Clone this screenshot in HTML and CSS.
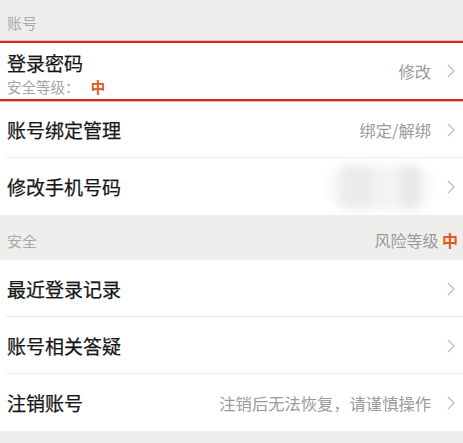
FILE: index.html
```html
<!DOCTYPE html>
<html lang="zh-CN">
<head>
<meta charset="utf-8">
<link rel="stylesheet" href="styles.css">
</head>
<body>
<div class="page">
  <div class="section-head head-first"><span>账号</span></div>
  <div class="group">
    <div class="row row-highlight">
      <div class="left">
        <div class="title">登录密码</div>
        <div class="sub">安全等级： <b class="level">中</b></div>
      </div>
      <div class="right"><span class="value">修改</span><svg class="chev" width="8" height="14" viewBox="0 0 8 14"><polyline points="1,1 7,7 1,13" fill="none" stroke="#bdbdbd" stroke-width="1.3"/></svg></div>
    </div>
    <div class="row sep">
      <div class="left"><div class="title">账号绑定管理</div></div>
      <div class="right"><span class="value">绑定/解绑</span><svg class="chev" width="8" height="14" viewBox="0 0 8 14"><polyline points="1,1 7,7 1,13" fill="none" stroke="#bdbdbd" stroke-width="1.3"/></svg></div>
    </div>
    <div class="row">
      <div class="left"><div class="title">修改手机号码</div></div>
      <div class="right"><div class="blur"></div><svg class="chev" width="8" height="14" viewBox="0 0 8 14"><polyline points="1,1 7,7 1,13" fill="none" stroke="#bdbdbd" stroke-width="1.3"/></svg></div>
    </div>
  </div>
  <div class="section-head head-second"><span>安全</span><span class="risk">风险等级 <b class="level">中</b></span></div>
  <div class="group">
    <div class="row sep">
      <div class="left"><div class="title">最近登录记录</div></div>
      <div class="right"><svg class="chev" width="8" height="14" viewBox="0 0 8 14"><polyline points="1,1 7,7 1,13" fill="none" stroke="#bdbdbd" stroke-width="1.3"/></svg></div>
    </div>
    <div class="row sep">
      <div class="left"><div class="title">账号相关答疑</div></div>
      <div class="right"><svg class="chev" width="8" height="14" viewBox="0 0 8 14"><polyline points="1,1 7,7 1,13" fill="none" stroke="#bdbdbd" stroke-width="1.3"/></svg></div>
    </div>
    <div class="row">
      <div class="left"><div class="title">注销账号</div></div>
      <div class="right"><span class="value">注销后无法恢复，请谨慎操作</span><svg class="chev" width="8" height="14" viewBox="0 0 8 14"><polyline points="1,1 7,7 1,13" fill="none" stroke="#bdbdbd" stroke-width="1.3"/></svg></div>
    </div>
  </div>
</div>
</body>
</html>
```

FILE: styles.css
```css
html, body {
  margin: 0;
  padding: 0;
  background: #efeeed;
}
body {
  width: 463px;
  height: 443px;
  overflow: hidden;
  font-family: "Noto Sans CJK SC", "Noto Sans", sans-serif;
}
.page {
  display: flex;
  flex-direction: column;
}
.section-head {
  display: flex;
  justify-content: space-between;
  align-items: center;
  box-sizing: border-box;
  padding: 4px 5px 0 7px;
  font-size: 15px;
  color: #a9a9a9;
}
.head-first {
  height: 41px;
}
.head-second {
  height: 45px;
  padding-top: 5px;
}
.risk {
  font-size: 16px;
  color: #9a9a9a;
}
.level {
  color: #e05a1c;
  font-weight: 700;
}
.group {
  background: #fff;
  display: flex;
  flex-direction: column;
}
.row {
  display: flex;
  align-items: center;
  justify-content: space-between;
  height: 57px;
  box-sizing: border-box;
  padding: 0 8px 0 7px;
  position: relative;
  background: #fff;
}
.row.sep::after {
  content: "";
  position: absolute;
  left: 6px;
  right: 0;
  bottom: 0;
  height: 1px;
  background: #ececec;
}
.row-highlight {
  height: 60px;
  border-top: 2px solid #cc2e2a;
  border-bottom: 2px solid #cc2e2a;
  box-shadow: 0 -1px 0 #f2b4b0, 0 1px 0 #f2b4b0;
  z-index: 1;
}
.left {
  display: flex;
  flex-direction: column;
}
.row-highlight .left {
  padding-top: 3px;
}
.title {
  font-size: 19px;
  line-height: 27px;
  font-weight: 400;
  color: #161616;
  -webkit-text-stroke: 0.25px #161616;
}
.sub {
  font-size: 14.5px;
  line-height: 21px;
  color: #a5a5a5;
}
.sub .level {
  margin-left: 8px;
}
.right {
  display: flex;
  align-items: center;
  gap: 16px;
}
.value {
  font-size: 16.3px;
  color: #9b9b9b;
}
.chev {
  display: block;
}
.blur {
  width: 104px;
  height: 44px;
  border-radius: 20px;
  background:
    linear-gradient(90deg, transparent 0 12%, #ebebeb 12% 42%, #f3f3f3 42% 70%, #e8e8e8 70% 88%, transparent 88%),
    #f7f7f7;
  filter: blur(5px);
  margin-right: -1px;
}
```
